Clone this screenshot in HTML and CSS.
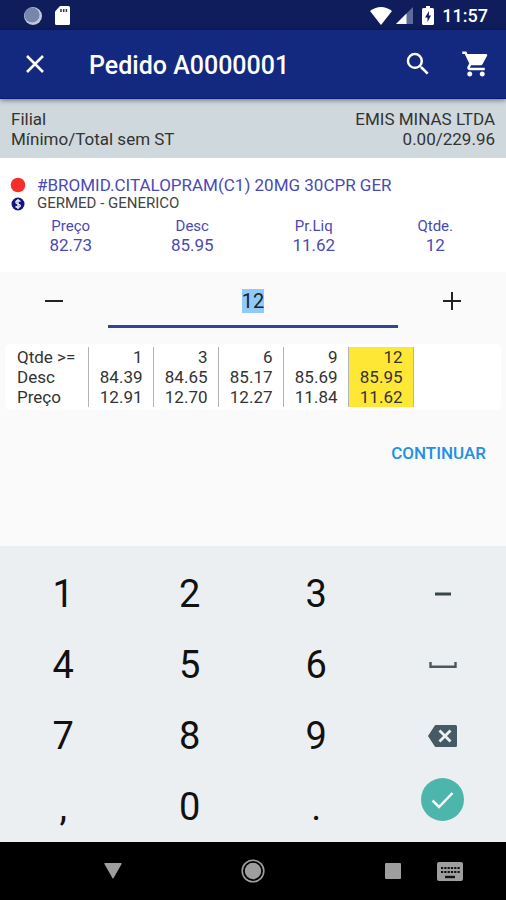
FILE: index.html
```html
<!DOCTYPE html>
<html lang="pt-BR">
<head>
<meta charset="utf-8">
<meta name="viewport" content="width=device-width, initial-scale=1">
<title>Pedido A0000001</title>
<link rel="stylesheet" href="styles.css">
</head>
<body>
<div class="status-bar">
  <div class="status-group">
    <svg width="18" height="18" viewBox="0 0 18 18" aria-hidden="true"><circle cx="9" cy="9" r="9" fill="#c3cadb"/><circle cx="8" cy="8" r="7.600" fill="#7885ad"/></svg>
    <svg width="15" height="19" viewBox="0 0 15 19" aria-hidden="true"><path d="M5 0h8.500a1.500 1.500 0 0 1 1.500 1.500v16a1.500 1.500 0 0 1-1.500 1.500h-12A1.500 1.500 0 0 1 0 17.500V5.500z" fill="#fff"/><path d="M6 3v3M8.700 3v3M11.400 3v3" stroke="#2a3568" stroke-width="1.500"/></svg>
  </div>
  <div class="status-group status-right">
    <svg width="22" height="18" viewBox="0 0 22 18" aria-hidden="true"><path d="M11 18 0 4Q11-4 22 4z" fill="#fff"/></svg>
    <svg width="17" height="17" viewBox="0 0 17 17" aria-hidden="true"><path d="M17 0v17H0z" fill="#5f6b98"/><path d="M10.500 6.500V17H0z" fill="#fff"/></svg>
    <svg class="battery" width="12" height="19" viewBox="0 0 12 19" aria-hidden="true"><path d="M4 0h4v2h2.500A1.500 1.500 0 0 1 12 3.500v14a1.500 1.500 0 0 1-1.500 1.500h-9A1.500 1.500 0 0 1 0 17.500v-14A1.500 1.500 0 0 1 1.500 2H4z" fill="#fff"/><path d="M7 5 3 11.500h2.500V16L9 9.500H6.800z" fill="#101d5c"/></svg>
    <span class="clock">11:57</span>
  </div>
</div>

<header class="app-bar">
  <button class="icon-button" type="button" aria-label="Fechar">
    <svg width="18" height="18" viewBox="0 0 18 18"><path d="M1 1l16 16M17 1 1 17" stroke="#fff" stroke-width="2.500"/></svg>
  </button>
  <h1>Pedido A0000001</h1>
  <button class="icon-button" type="button" aria-label="Buscar">
    <svg width="30" height="30" viewBox="0 0 24 24"><path fill="#fff" d="M15.500 14h-.79l-.28-.27A6.470 6.470 0 0 0 16 9.500 6.500 6.500 0 1 0 9.500 16c1.610 0 3.090-.59 4.230-1.570l.27.28v.79l5 4.990L20.490 19l-4.990-5zm-6 0C7.010 14 5 11.990 5 9.500S7.010 5 9.500 5 14 7.010 14 9.500 11.990 14 9.500 14z"/></svg>
  </button>
  <button class="icon-button" type="button" aria-label="Carrinho">
    <svg width="30" height="30" viewBox="0 0 24 24"><path fill="#fff" d="M7 18c-1.100 0-1.990.9-1.990 2S5.900 22 7 22s2-.9 2-2-.9-2-2-2zM1 2v2h2l3.600 7.590-1.350 2.450c-.16.28-.25.61-.25.960 0 1.100.9 2 2 2h12v-2H7.420c-.14 0-.25-.11-.25-.25l.03-.12.900-1.630h7.450c.75 0 1.410-.41 1.750-1.030l3.580-6.490A1.003 1.003 0 0 0 20 4H5.210l-.94-2H1zm16 16c-1.100 0-1.990.9-1.990 2s.89 2 1.990 2 2-.9 2-2-.9-2-2-2z"/></svg>
  </button>
</header>

<section class="order-info">
  <div class="info-row"><span>Filial</span><span>EMIS MINAS LTDA</span></div>
  <div class="info-row"><span>Mínimo/Total sem ST</span><span>0.00/229.96</span></div>
</section>

<main>
  <section class="product">
    <div class="product-line">
      <svg width="16" height="16" viewBox="0 0 16 16" aria-hidden="true"><circle cx="8" cy="8" r="7.300" fill="#f5302c"/></svg>
      <h2>#BROMID.CITALOPRAM(C1) 20MG 30CPR GER</h2>
    </div>
    <div class="product-line maker">
      <svg width="16" height="16" viewBox="0 0 16 16" aria-hidden="true"><circle cx="8" cy="8" r="6.500" fill="#14147c"/><path d="M10.500 5.500Q8 3.800 6.300 5.200 5 7 8 8t2 2.500Q8.500 12 5.500 10.500M8 3v10" fill="none" stroke="#e4e6f5" stroke-width="1.500"/></svg>
      <p>GERMED - GENERICO</p>
    </div>
    <dl class="stats">
      <div><dt>Preço</dt><dd>82.73</dd></div>
      <div><dt>Desc</dt><dd>85.95</dd></div>
      <div><dt>Pr.Liq</dt><dd>11.62</dd></div>
      <div><dt>Qtde.</dt><dd>12</dd></div>
    </dl>
  </section>

  <form class="editor">
    <div class="stepper">
      <button type="button" aria-label="Diminuir"><svg width="18" height="18" viewBox="0 0 18 18"><path d="M0 9h18" stroke="#222" stroke-width="2"/></svg></button>
      <input id="quantity" type="text" inputmode="numeric" value="12" aria-label="Quantidade">
      <button type="button" aria-label="Aumentar"><svg width="18" height="18" viewBox="0 0 18 18"><path d="M0 9h18M9 0v18" stroke="#222" stroke-width="2"/></svg></button>
    </div>
    <div class="tiers">
      <table>
        <tr><th scope="row">Qtde &gt;=</th><td>1</td><td>3</td><td>6</td><td>9</td><td class="current">12</td></tr>
        <tr><th scope="row">Desc</th><td>84.39</td><td>84.65</td><td>85.17</td><td>85.69</td><td class="current">85.95</td></tr>
        <tr><th scope="row">Preço</th><td>12.91</td><td>12.70</td><td>12.27</td><td>11.84</td><td class="current">11.62</td></tr>
      </table>
    </div>
    <button class="continue" type="button">CONTINUAR</button>
  </form>
</main>

<div class="keypad">
  <button type="button">1</button>
  <button type="button">2</button>
  <button type="button">3</button>
  <button type="button" aria-label="Menos"><svg width="16" height="4" viewBox="0 0 16 4"><path d="M0 2h16" stroke="#374449" stroke-width="3"/></svg></button>
  <button type="button">4</button>
  <button type="button">5</button>
  <button type="button">6</button>
  <button type="button" aria-label="Espaço"><svg width="28" height="6" viewBox="0 0 28 6"><path d="M1.500 0v4.700h25V0" fill="none" stroke="#4a585e" stroke-width="2.400"/></svg></button>
  <button type="button">7</button>
  <button type="button">8</button>
  <button type="button">9</button>
  <button type="button" aria-label="Apagar"><svg width="29" height="22" viewBox="0 0 29 22"><path d="M8 0h19.500A1.500 1.500 0 0 1 29 1.500v19a1.500 1.500 0 0 1-1.500 1.500H8q-1 0-1.500-1L0 11 6.500 1Q7 0 8 0z" fill="#455a64"/><path d="M11.500 5.500l11 11M22.500 5.500l-11 11" stroke="#eceff1" stroke-width="2.800"/></svg></button>
  <button type="button">,</button>
  <button type="button">0</button>
  <button type="button">.</button>
  <button class="confirm" type="button" aria-label="Confirmar"><svg width="43" height="43" viewBox="0 0 43 43"><circle cx="21.500" cy="21.500" r="21.500" fill="#4db6ac"/><path d="M11.500 22.500l6.500 6.500L31.500 15" fill="none" stroke="#fff" stroke-width="2.500"/></svg></button>
</div>

<nav class="system-nav" aria-label="Sistema">
  <button type="button" aria-label="Voltar"><svg width="18" height="16" viewBox="0 0 18 16"><path d="M1 0h16q1 0 .6 1L9.600 15q-.6 1-1.200 0L.4 1Q0 0 1 0z" fill="#9e9e9e"/></svg></button>
  <button type="button" aria-label="Início"><svg width="24" height="24" viewBox="0 0 24 24"><circle cx="12" cy="12" r="8.200" fill="#9e9e9e"/><circle cx="12" cy="12" r="10.800" fill="none" stroke="#9e9e9e" stroke-width="1.600"/></svg></button>
  <div class="nav-end">
    <button type="button" aria-label="Recentes"><svg width="16" height="16" viewBox="0 0 16 16"><rect width="16" height="16" rx="1" fill="#9e9e9e"/></svg></button>
    <button type="button" aria-label="Teclado"><svg width="26" height="19" viewBox="0 0 26 19"><rect width="26" height="19" rx="2" fill="#9e9e9e"/><path d="M4 6h19M4 10h19" stroke="#111" stroke-width="2.200" stroke-dasharray="2.200 1.100"/><path d="M8 15h10" stroke="#111" stroke-width="2.400"/></svg></button>
  </div>
</nav>
<script>
  const quantity = document.getElementById("quantity");
  quantity.focus();
  quantity.select();
</script>
</body>
</html>
```

FILE: styles.css
```css
* { box-sizing: border-box; }

body {
  margin: 0;
  min-height: 100vh;
  display: flex;
  flex-direction: column;
  background: #fafafa;
  color: #333;
  font: 17px/20px Roboto, sans-serif;
}

h1, h2, p, dl, dd { margin: 0; font-weight: 400; }

button {
  border: 0;
  padding: 0;
  background: none;
  color: inherit;
  font: inherit;
}

svg { display: block; }

.status-bar {
  display: flex;
  justify-content: space-between;
  padding: 1px 18px 0 24px;
  height: 30px;
  background: #101d5c;
  color: #fff;
}

.status-group { display: flex; align-items: center; gap: 13px; }
.status-right { gap: 4px; }
.battery { margin: 0 4px 0 5px; }
.clock { font-size: 18px; font-weight: 500; }

.app-bar {
  display: flex;
  align-items: center;
  padding: 0 10px 0 15px;
  height: 69px;
  background: #12297f;
  border-bottom: 1px solid #0a1a72;
  color: #fff;
  box-shadow: 0 1px 5px rgba(0, 0, 0, .5);
  z-index: 1;
}

.app-bar h1 {
  flex: 1;
  padding: 3px 0 0 34px;
  font-size: 25px;
  line-height: 30px;
  font-weight: 500;
}

.icon-button {
  display: grid;
  place-items: center;
  width: 40px;
  height: 48px;
}
.icon-button + .icon-button { margin-left: 18px; }

.order-info {
  padding: 10px 11px 9px;
  background: #cfd8dc;
}
.info-row { display: flex; justify-content: space-between; }

.product {
  padding: 17px 10px;
  background: #fff;
  color: #4a4ab4;
}
.product-line { display: flex; align-items: center; gap: 11px; }
.product-line h2 { font-size: 17px; line-height: 20px; }
.maker { color: #444; font-size: 15px; line-height: 17px; }

.stats {
  display: grid;
  grid-template-columns: repeat(4, 1fr);
  padding-top: 5px;
  text-align: center;
}
.stats dt { font-size: 15px; line-height: 18px; }

main { flex: 1; }

.stepper {
  display: flex;
  align-items: flex-start;
  padding-top: 8px;
}
.stepper button {
  display: grid;
  place-items: center;
  width: 108px;
  height: 42px;
}
.stepper input {
  flex: 1;
  min-width: 0;
  height: 48px;
  padding: 0 0 3px;
  border: 0;
  border-bottom: 3px solid #34449a;
  outline: 0;
  background: none;
  color: #222;
  font: 20px/24px Roboto, sans-serif;
  text-align: center;
}
.stepper input::selection { background: #90caf9; color: #222; }

.tiers {
  margin: 16px 5px 0;
  padding: 3px 8px;
  border-radius: 5px;
  background: #fff;
}
.tiers table { border-collapse: collapse; }
.tiers th, .tiers td { padding: 0; height: 20px; border-right: 1px solid #b4b4b4; }
.tiers th {
  width: 75px;
  padding-left: 4px;
  font-weight: 400;
  text-align: left;
}
.tiers td {
  width: 65px;
  padding-right: 10px;
  text-align: right;
}
.tiers .current { background: #ffe735; }

.continue {
  display: block;
  margin: 19px 8px 20px auto;
  padding: 0 12px;
  height: 48px;
  color: #2190e6;
  font-weight: 500;
}

.keypad {
  display: grid;
  grid-template-columns: repeat(4, 1fr);
  grid-auto-rows: 71px;
  padding-top: 12px;
  background: #eceff1;
  color: #111;
  font-size: 38px;
  line-height: 44px;
}
.keypad button { display: grid; place-items: center; }
.keypad .confirm { align-items: start; padding-top: 7px; }

.system-nav {
  display: grid;
  grid-template-columns: 1fr 54px 1fr;
  height: 58px;
  background: #000;
}
.system-nav button { display: grid; place-items: center; }
.nav-end {
  display: flex;
  justify-content: flex-end;
  align-items: center;
  gap: 36px;
  padding-right: 43px;
}
```
